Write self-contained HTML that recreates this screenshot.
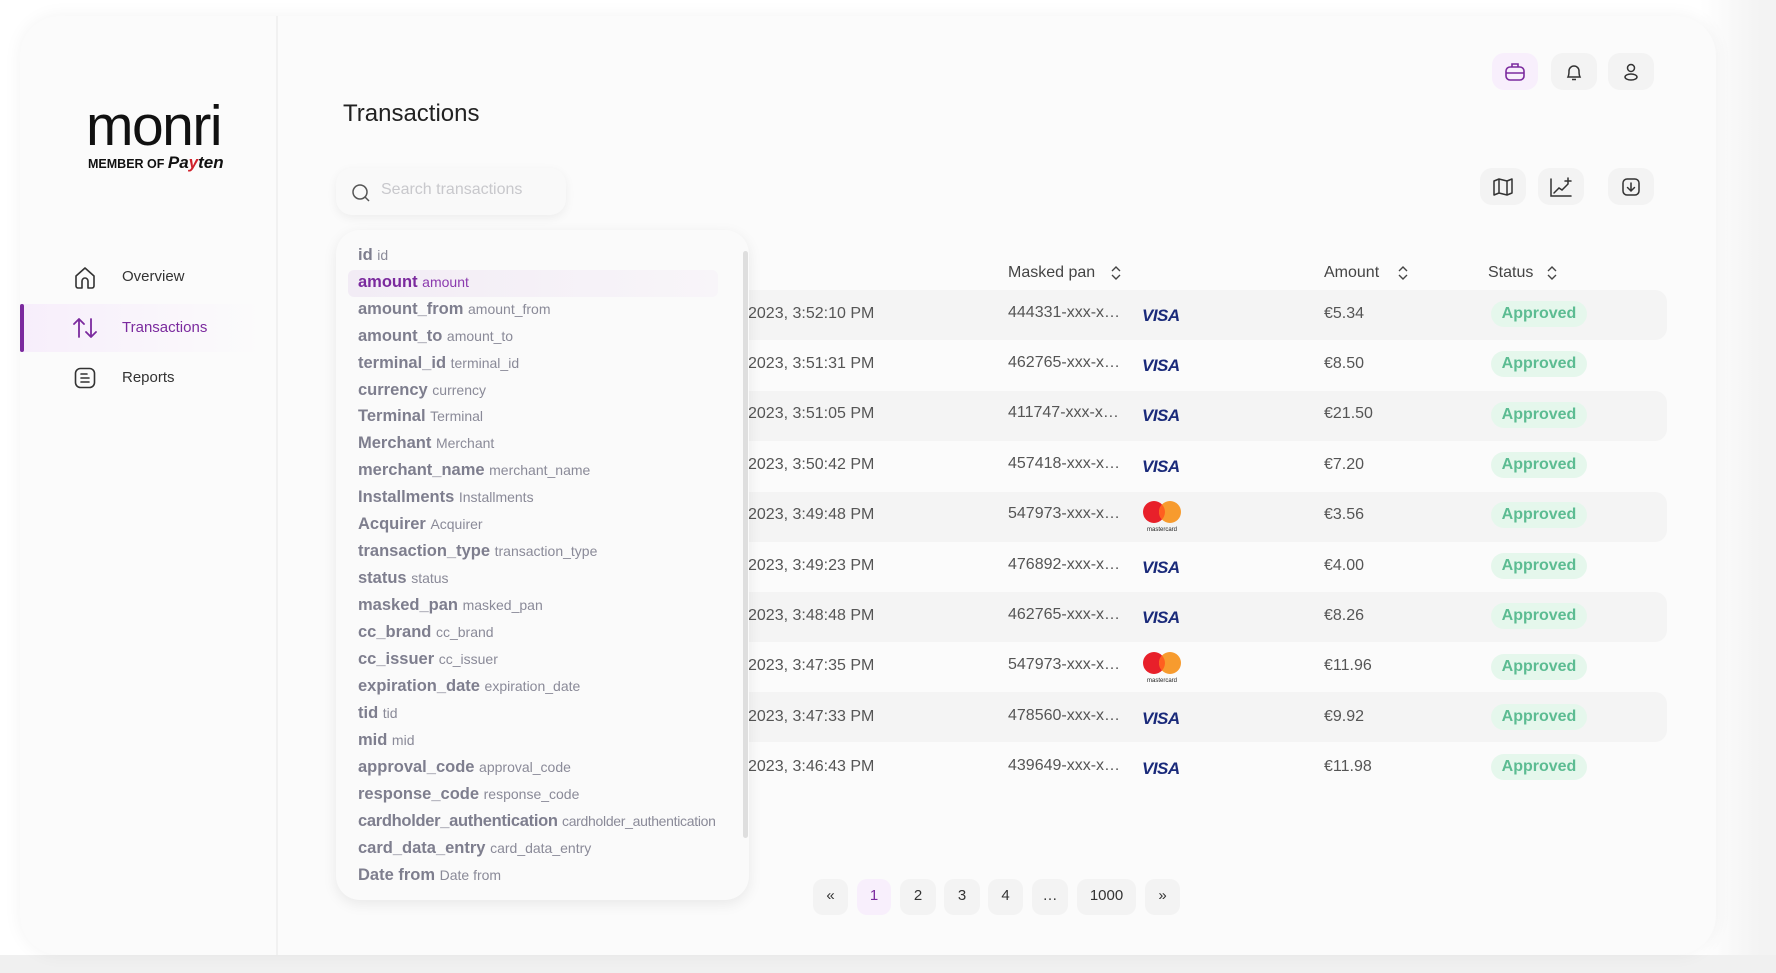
<!DOCTYPE html>
<html><head><meta charset="utf-8"><style>
*{box-sizing:border-box;margin:0;padding:0}
body{width:1776px;height:973px;overflow:hidden;background:#f0f0f0;font-family:"Liberation Sans",sans-serif;position:relative}
.top{position:absolute;left:0;top:0;width:1776px;height:955px;background:linear-gradient(90deg,#fff 0,#fff 1700px,#f3f3f3 1760px)}
.card{position:absolute;left:20px;top:16px;width:1696px;height:939px;background:#fbfbfb;border-radius:40px;box-shadow:0 0 18px rgba(0,0,0,.05)}
.side{position:absolute;left:20px;top:16px;width:258px;height:939px;border-right:2px solid #f1f1f1}
.abs{position:absolute}
.nav{position:absolute;left:122px;font-size:15px;color:#333}
.ib{position:absolute;width:46px;height:37px;border-radius:12px;background:#f3f3f3;display:flex;align-items:center;justify-content:center}
.th{position:absolute;top:264px;font-size:16px;color:#444}
.row{position:absolute;left:700px;width:967px;height:50px;border-radius:12px}
.row.s{background:#f4f4f4}
.cell{position:absolute;font-size:16px;color:#555}
.badge{position:absolute;left:1491px;width:96px;height:26px;border-radius:13px;background:#e5f7ec;color:#5cbc92;font-size:16px;font-weight:bold;text-align:center;line-height:26px}
.visa{position:absolute;left:1142px;font-family:"Liberation Sans",sans-serif;font-weight:bold;font-style:italic;font-size:17px;color:#1a2a7a;letter-spacing:-.5px}
.dd{position:absolute;left:336px;top:230px;width:413px;height:670px;background:#fafafa;border-radius:24px;box-shadow:0 4px 14px rgba(0,0,0,.08);overflow:hidden}
.it{position:absolute;left:22px;font-size:16.5px;font-weight:bold;color:#7e7e8e;white-space:nowrap}
.it span{font-weight:normal;font-size:14px;color:#8a8a98}
.pg{position:absolute;top:879px;height:36px;border-radius:10px;background:#f3f3f3;font-size:15px;color:#333;text-align:center;line-height:34px}
</style></head><body>
<div class="top"></div>
<div class="card"></div>
<div class="side"></div>
<div class="abs" style="left:86px;top:96px;font-size:57px;color:#111;letter-spacing:-1.5px;line-height:60px">monri</div>
<div class="abs" style="left:88px;top:153px;font-size:12.5px;font-weight:bold;color:#111;white-space:nowrap">MEMBER OF <span style="font-size:17px;font-style:italic">Pa<span style="color:#d0202a">y</span>ten</span></div>
<svg class="abs" style="left:73px;top:266px" width="24" height="24" viewBox="0 0 24 24" fill="none" stroke="#333" stroke-width="1.6" stroke-linejoin="round"><path d="M3 10 L12 2 L21 10 V20 a2 2 0 0 1-2 2 H15 V15 a3 3 0 0 0-6 0 V22 H5 a2 2 0 0 1-2-2 Z"/></svg>
<div class="nav" style="top:268px">Overview</div>
<div class="abs" style="left:20px;top:304px;width:240px;height:48px;background:linear-gradient(90deg,#f7eefb,#fbfbfb)"></div>
<div class="abs" style="left:20px;top:304px;width:4px;height:48px;background:#7b2a9e;border-radius:2px"></div>
<svg class="abs" style="left:73px;top:317px" width="24" height="22" viewBox="0 0 24 22" fill="none" stroke="#7b2a9e" stroke-width="1.8" stroke-linecap="round" stroke-linejoin="round"><path d="M6 20V2M1 7l5-5 5 5M18 2v18M13 15l5 5 5-5"/></svg>
<div class="nav" style="top:319px;color:#7b2a9e">Transactions</div>
<svg class="abs" style="left:74px;top:367px" width="22" height="22" viewBox="0 0 22 22" fill="none" stroke="#333" stroke-width="1.6" stroke-linecap="round"><rect x="1.5" y="1.5" width="19" height="19" rx="5"/><path d="M7 7h6M7 11h8M7 15h8"/></svg>
<div class="nav" style="top:369px">Reports</div>
<div class="abs" style="left:343px;top:100px;font-size:24px;color:#222">Transactions</div>
<div class="ib" style="left:1492px;top:53px;background:#f8effc"><svg width="22" height="20" viewBox="0 0 22 20" fill="none" stroke="#7b2a9e" stroke-width="1.6"><rect x="2" y="5" width="18" height="13" rx="4"/><path d="M8 5V2h6v3M2 11h18"/></svg></div>
<div class="ib" style="left:1551px;top:53px"><svg width="20" height="20" viewBox="0 0 20 20" fill="none" stroke="#333" stroke-width="1.5"><path d="M4 15 Q5 13 5 9 a5 5 0 0 1 10 0 Q15 13 16 15 Z M8 17.5 h4"/></svg></div>
<div class="ib" style="left:1608px;top:53px"><svg width="20" height="20" viewBox="0 0 20 20" fill="none" stroke="#333" stroke-width="1.5"><circle cx="10" cy="6" r="3.5"/><ellipse cx="10" cy="15" rx="6" ry="3"/></svg></div>
<div class="ib" style="left:1480px;top:168px"><svg width="22" height="20" viewBox="0 0 22 20" fill="none" stroke="#333" stroke-width="1.5" stroke-linejoin="round"><path d="M2 4 L7 2 L15 4 L20 2 V16 L15 18 L7 16 L2 18 Z M7 2V16M15 4V18"/></svg></div>
<div class="ib" style="left:1538px;top:168px"><svg width="24" height="22" viewBox="0 0 24 22" fill="none" stroke="#333" stroke-width="1.5" stroke-linecap="round"><path d="M2 3V20H22M5 17l5-5 3 2 6-6M19 2v6M16 5h6"/></svg></div>
<div class="ib" style="left:1608px;top:168px"><svg width="20" height="20" viewBox="0 0 20 20" fill="none" stroke="#333" stroke-width="1.5" stroke-linecap="round"><rect x="2" y="2" width="16" height="16" rx="4"/><path d="M10 6v8M6.5 10.5 10 14l3.5-3.5"/></svg></div>
<div class="abs" style="left:336px;top:168px;width:230px;height:47px;border-radius:16px;background:#f9f9f9;box-shadow:0 3px 10px rgba(0,0,0,.06)"></div>
<svg class="abs" style="left:351px;top:183px" width="20" height="20" viewBox="0 0 20 20" fill="none" stroke="#555" stroke-width="1.5"><circle cx="9" cy="9" r="7"/><path d="M14 14l4 4"/></svg>
<div class="abs" style="left:381px;top:181px;font-size:16px;color:#c8c8cc">Search transactions</div>
<div class="th" style="left:1008px">Masked pan</div>
<div class="th" style="left:1324px">Amount</div>
<div class="th" style="left:1488px">Status</div>
<svg class="abs" style="left:1110px;top:265px" width="12" height="16" viewBox="0 0 12 16" fill="none" stroke="#444" stroke-width="1.4"><path d="M2 6l4-4 4 4M2 10l4 4 4-4"/></svg>
<svg class="abs" style="left:1397px;top:265px" width="12" height="16" viewBox="0 0 12 16" fill="none" stroke="#444" stroke-width="1.4"><path d="M2 6l4-4 4 4M2 10l4 4 4-4"/></svg>
<svg class="abs" style="left:1546px;top:265px" width="12" height="16" viewBox="0 0 12 16" fill="none" stroke="#444" stroke-width="1.4"><path d="M2 6l4-4 4 4M2 10l4 4 4-4"/></svg>

<div class="row s" style="top:290px"></div>
<div class="row s" style="top:391px"></div>
<div class="row s" style="top:492px"></div>
<div class="row s" style="top:592px"></div>
<div class="row s" style="top:692px"></div>

<div class="cell" style="left:748px;top:305px">2023, 3:52:10 PM</div><div class="cell" style="left:1008px;top:304px">444331-xxx-x…</div><div class="visa" style="top:306px">VISA</div><div class="cell" style="left:1324px;top:305px">€5.34</div><div class="badge" style="top:301px">Approved</div>
<div class="cell" style="left:748px;top:355px">2023, 3:51:31 PM</div><div class="cell" style="left:1008px;top:354px">462765-xxx-x…</div><div class="visa" style="top:356px">VISA</div><div class="cell" style="left:1324px;top:355px">€8.50</div><div class="badge" style="top:351px">Approved</div>
<div class="cell" style="left:748px;top:405px">2023, 3:51:05 PM</div><div class="cell" style="left:1008px;top:404px">411747-xxx-x…</div><div class="visa" style="top:406px">VISA</div><div class="cell" style="left:1324px;top:405px">€21.50</div><div class="badge" style="top:402px">Approved</div>
<div class="cell" style="left:748px;top:456px">2023, 3:50:42 PM</div><div class="cell" style="left:1008px;top:455px">457418-xxx-x…</div><div class="visa" style="top:457px">VISA</div><div class="cell" style="left:1324px;top:456px">€7.20</div><div class="badge" style="top:452px">Approved</div>
<div class="cell" style="left:748px;top:506px">2023, 3:49:48 PM</div><div class="cell" style="left:1008px;top:505px">547973-xxx-x…</div><div class="cell" style="left:1324px;top:506px">€3.56</div><div class="badge" style="top:502px">Approved</div>
<div class="cell" style="left:748px;top:557px">2023, 3:49:23 PM</div><div class="cell" style="left:1008px;top:556px">476892-xxx-x…</div><div class="visa" style="top:558px">VISA</div><div class="cell" style="left:1324px;top:557px">€4.00</div><div class="badge" style="top:553px">Approved</div>
<div class="cell" style="left:748px;top:607px">2023, 3:48:48 PM</div><div class="cell" style="left:1008px;top:606px">462765-xxx-x…</div><div class="visa" style="top:608px">VISA</div><div class="cell" style="left:1324px;top:607px">€8.26</div><div class="badge" style="top:603px">Approved</div>
<div class="cell" style="left:748px;top:657px">2023, 3:47:35 PM</div><div class="cell" style="left:1008px;top:656px">547973-xxx-x…</div><div class="cell" style="left:1324px;top:657px">€11.96</div><div class="badge" style="top:654px">Approved</div>
<div class="cell" style="left:748px;top:708px">2023, 3:47:33 PM</div><div class="cell" style="left:1008px;top:707px">478560-xxx-x…</div><div class="visa" style="top:709px">VISA</div><div class="cell" style="left:1324px;top:708px">€9.92</div><div class="badge" style="top:704px">Approved</div>
<div class="cell" style="left:748px;top:758px">2023, 3:46:43 PM</div><div class="cell" style="left:1008px;top:757px">439649-xxx-x…</div><div class="visa" style="top:759px">VISA</div><div class="cell" style="left:1324px;top:758px">€11.98</div><div class="badge" style="top:754px">Approved</div>

<svg class="abs" style="left:1142px;top:500px" width="42" height="34" viewBox="0 0 42 34"><circle cx="12" cy="12" r="11" fill="#e8202a"/><circle cx="28" cy="12" r="11" fill="#f79b2e"/><path d="M20 4.5a11 11 0 0 1 0 15a11 11 0 0 1 0-15z" fill="#ff5f1f"/><text x="20" y="31" font-size="6" text-anchor="middle" fill="#222" font-family="Liberation Sans">mastercard</text></svg>
<svg class="abs" style="left:1142px;top:651px" width="42" height="34" viewBox="0 0 42 34"><circle cx="12" cy="12" r="11" fill="#e8202a"/><circle cx="28" cy="12" r="11" fill="#f79b2e"/><path d="M20 4.5a11 11 0 0 1 0 15a11 11 0 0 1 0-15z" fill="#ff5f1f"/><text x="20" y="31" font-size="6" text-anchor="middle" fill="#222" font-family="Liberation Sans">mastercard</text></svg>

<div class="dd">
<div class="abs" style="left:12px;top:40px;width:370px;height:27px;border-radius:6px;background:linear-gradient(90deg,#f2ecf5,#f8f5f9)"></div>
<div class="abs" style="left:407px;top:21px;width:5px;height:587px;border-radius:3px;background:#dedede"></div>
<div class="it" style="top:16px">id <span>id</span></div>
<div class="it" style="top:43px;color:#7b2a9e">amount <span style="color:#8b3aae">amount</span></div>
<div class="it" style="top:70px">amount_from <span>amount_from</span></div>
<div class="it" style="top:97px">amount_to <span>amount_to</span></div>
<div class="it" style="top:124px">terminal_id <span>terminal_id</span></div>
<div class="it" style="top:151px">currency <span>currency</span></div>
<div class="it" style="top:177px">Terminal <span>Terminal</span></div>
<div class="it" style="top:204px">Merchant <span>Merchant</span></div>
<div class="it" style="top:231px">merchant_name <span>merchant_name</span></div>
<div class="it" style="top:258px">Installments <span>Installments</span></div>
<div class="it" style="top:285px">Acquirer <span>Acquirer</span></div>
<div class="it" style="top:312px">transaction_type <span>transaction_type</span></div>
<div class="it" style="top:339px">status <span>status</span></div>
<div class="it" style="top:366px">masked_pan <span>masked_pan</span></div>
<div class="it" style="top:393px">cc_brand <span>cc_brand</span></div>
<div class="it" style="top:420px">cc_issuer <span>cc_issuer</span></div>
<div class="it" style="top:447px">expiration_date <span>expiration_date</span></div>
<div class="it" style="top:474px">tid <span>tid</span></div>
<div class="it" style="top:501px">mid <span>mid</span></div>
<div class="it" style="top:528px">approval_code <span>approval_code</span></div>
<div class="it" style="top:555px">response_code <span>response_code</span></div>
<div class="it" style="top:582px;letter-spacing:-.3px">cardholder_authentication <span>cardholder_authentication</span></div>
<div class="it" style="top:609px">card_data_entry <span>card_data_entry</span></div>
<div class="it" style="top:636px">Date from <span>Date from</span></div>
<div class="it" style="top:663px">-</div>
</div>

<div class="pg" style="left:813px;width:35px">«</div>
<div class="pg" style="left:857px;width:34px;background:#f8effc;color:#7b2a9e">1</div>
<div class="pg" style="left:900px;width:36px">2</div>
<div class="pg" style="left:944px;width:36px">3</div>
<div class="pg" style="left:988px;width:35px">4</div>
<div class="pg" style="left:1032px;width:36px">…</div>
<div class="pg" style="left:1077px;width:59px">1000</div>
<div class="pg" style="left:1145px;width:35px">»</div>
</body></html>
